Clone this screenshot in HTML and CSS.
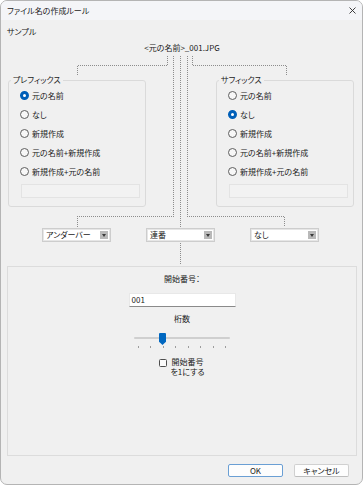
FILE: index.html
```html
<!DOCTYPE html>
<html lang="ja">
<head>
    <meta charset="UTF-8">
    <meta name="viewport" content="width=device-width, initial-scale=1.0">
    <title>ファイル名の作成ルール</title>
    <link rel="stylesheet" href="styles.css">
</head>
<body>
    <div class="window">
        <div class="title-bar">
            <span>ファイル名の作成ルール</span>
            <svg class="close" width="7" height="7" viewBox="0 0 7 7">
                <path d="M0.5 0.5L6.5 6.5M6.5 0.5L0.5 6.5" stroke="#2b2b2b" stroke-width="0.9" fill="none"/>
            </svg>
        </div>

        <div class="caption">サンプル</div>
        <div class="sample">&lt;元の名前&gt;_001.JPG</div>

        <!-- Prefix / suffix groups -->
        <div class="groups">
            <fieldset class="group">
                <legend>プレフィックス</legend>
                <div class="options">
                    <div class="radio checked"><span class="dot"></span>元の名前</div>
                    <div class="radio"><span class="dot"></span>なし</div>
                    <div class="radio"><span class="dot"></span>新規作成</div>
                    <div class="radio"><span class="dot"></span>元の名前+新規作成</div>
                    <div class="radio"><span class="dot"></span>新規作成+元の名前</div>
                    <div class="field"></div>
                </div>
            </fieldset>
            <fieldset class="group">
                <legend>サフィックス</legend>
                <div class="options">
                    <div class="radio"><span class="dot"></span>元の名前</div>
                    <div class="radio checked"><span class="dot"></span>なし</div>
                    <div class="radio"><span class="dot"></span>新規作成</div>
                    <div class="radio"><span class="dot"></span>元の名前+新規作成</div>
                    <div class="radio"><span class="dot"></span>新規作成+元の名前</div>
                    <div class="field"></div>
                </div>
            </fieldset>
        </div>

        <!-- Separators -->
        <div class="combos">
            <div class="combo"><span>アンダーバー</span><span class="arrow"></span></div>
            <div class="combo"><span>連番</span><span class="arrow"></span></div>
            <div class="combo"><span>なし</span><span class="arrow"></span></div>
        </div>

        <!-- Numbering options -->
        <div class="panel">
            <div class="panel-label">開始番号：</div>
            <div class="textbox">001</div>
            <div class="panel-label digits">桁数</div>
            <div class="slider">
                <div class="track"></div>
                <div class="thumb"></div>
                <div class="ticks">
                    <i></i><i></i><i></i><i></i><i></i><i></i><i></i><i></i>
                </div>
            </div>
            <div class="check">
                <span class="box"></span>
                <span class="check-text">開始番号<br>を1にする</span>
            </div>
        </div>

        <div class="buttons">
            <button class="btn default">OK</button>
            <button class="btn">キャンセル</button>
        </div>

        <!-- Connector diagram from the sample name to each control -->
        <svg class="links" width="363" height="485" viewBox="0 0 363 485">
            <path d="M167.5 56V65.5H77.5V75
                     M192.5 56V65.5H286.5V75
                     M173.5 56V216.5H77.5V227
                     M187.5 56V216.5H284.5V227
                     M180.5 56V227
                     M180.5 243V265"
                  stroke="#8c8c8c" stroke-width="1" stroke-dasharray="1 1" fill="none" shape-rendering="crispEdges"/>
        </svg>
    </div>
</body>
</html>
```

FILE: styles.css
```css
body {
    margin: 0;
    background: #ffffff;
    font-family: "Noto Sans CJK JP", "Noto Sans", sans-serif;
    font-size: 8px;
    line-height: 10px;
    font-feature-settings: "palt";
    color: #1b1b1b;
}

.window {
    position: relative;
    width: 363px;
    height: 485px;
    box-sizing: border-box;
    border: 1px solid #b4b4b4;
    border-radius: 7px;
    overflow: hidden;
    background-color: #f0f0f0;
    display: flex;
    flex-direction: column;
}

.title-bar {
    height: 19px;
    flex: none;
    padding: 0 6px;
    display: flex;
    align-items: center;
    justify-content: space-between;
    background-color: #f4f5f8;
}

.close {
    display: block;
}

.caption {
    margin-top: 7px;
    padding-left: 6px;
}

.sample {
    margin-top: 6px;
    text-align: center;
    padding-left: 1px;
}

/* Group boxes */
.groups {
    margin-top: 22px;
    padding-left: 7px;
    display: grid;
    grid-template-columns: 138px 138px;
    column-gap: 70px;
}

.group {
    margin: 0;
    padding: 0 0 8px 0;
    border: 1px solid #dadada;
    border-radius: 3px;
    min-width: 0;
}

.group legend {
    margin-left: 2px;
    padding: 0 2px;
    line-height: 10px;
}

.options {
    padding: 1px 0 0 11px;
}

.radio {
    height: 19px;
    display: flex;
    align-items: center;
    gap: 3px;
}

.dot {
    width: 9px;
    height: 9px;
    box-sizing: border-box;
    border: 1px solid #5e5e5e;
    border-radius: 50%;
    background-color: #f7f7f7;
    flex: none;
}

.radio.checked .dot {
    border: 3px solid #005fb8;
    background-color: #ffffff;
}

.field {
    margin: 3px 0 0 1px;
    width: 119px;
    height: 14px;
    box-sizing: border-box;
    border: 1px solid #e3e3e3;
    background-color: #f2f2f2;
}

/* Combo boxes */
.combos {
    margin-top: 21px;
    padding-left: 41px;
    display: flex;
    gap: 35px;
}

.combo {
    width: 69px;
    height: 14px;
    box-sizing: border-box;
    border: 1px solid #cdcdcd;
    box-shadow: inset 0 0 0 1px #e6e6e6;
    background-color: #ffffff;
    display: flex;
    align-items: center;
    justify-content: space-between;
    padding: 0 2px 0 3px;
}

.arrow {
    width: 8px;
    height: 8px;
    background-color: #b9b9b9;
    position: relative;
}

.arrow::after {
    content: "";
    position: absolute;
    left: 1.5px;
    top: 3px;
    border-left: 2.5px solid transparent;
    border-right: 2.5px solid transparent;
    border-top: 3px solid #3a3a3a;
}

/* Numbering panel */
.panel {
    margin: 24px 5px 0 6px;
    height: 190px;
    box-sizing: border-box;
    border: 1px solid #dcdcdc;
    padding-top: 7px;
    display: flex;
    flex-direction: column;
    align-items: center;
}

.textbox {
    margin-top: 9px;
    width: 107px;
    height: 14px;
    box-sizing: border-box;
    background-color: #ffffff;
    border: 1px solid #e8e8e8;
    border-bottom-color: #8a8a8a;
    padding-left: 2px;
    display: flex;
    align-items: center;
}

.panel-label.digits {
    margin-top: 7px;
}

.slider {
    position: relative;
    margin-top: 5px;
    width: 96px;
    height: 20px;
}

.track {
    margin-top: 8px;
    height: 2px;
    background-color: #cfcfcf;
    border-radius: 1px;
}

.thumb {
    position: absolute;
    left: 25px;
    top: 4px;
    width: 7px;
    height: 12px;
    background-color: #0067c0;
    border-radius: 1px 1px 0 0;
    clip-path: polygon(0 0, 100% 0, 100% 72%, 50% 100%, 0 72%);
}

.ticks {
    margin: 7px 0 0 4px;
    width: 88px;
    display: flex;
    justify-content: space-between;
}

.ticks i {
    width: 1px;
    height: 2px;
    background-color: #9c9c9c;
}

.check {
    margin-top: 8px;
    display: flex;
    align-items: flex-start;
    gap: 3px;
}

.box {
    margin-top: 2px;
    width: 8px;
    height: 8px;
    box-sizing: border-box;
    border: 1px solid #4e4e4e;
    border-radius: 1.5px;
    background-color: #fbfbfb;
}

.check-text {
    text-align: center;
}

/* Dialog buttons */
.buttons {
    margin-top: 8px;
    padding-right: 13px;
    display: flex;
    justify-content: flex-end;
    gap: 11px;
}

.btn {
    width: 55px;
    height: 13px;
    padding: 0;
    box-sizing: border-box;
    font-family: inherit;
    font-size: 8px;
    line-height: 10px;
    font-feature-settings: "palt";
    color: #1b1b1b;
    background-color: #fdfdfd;
    border: 1px solid #d0d0d0;
    border-bottom-color: #bdbdbd;
    border-radius: 2px;
}

.btn.default {
    border-color: #6a9fd4;
}

.links {
    position: absolute;
    left: -1px;
    top: -1px;
    pointer-events: none;
}
```
